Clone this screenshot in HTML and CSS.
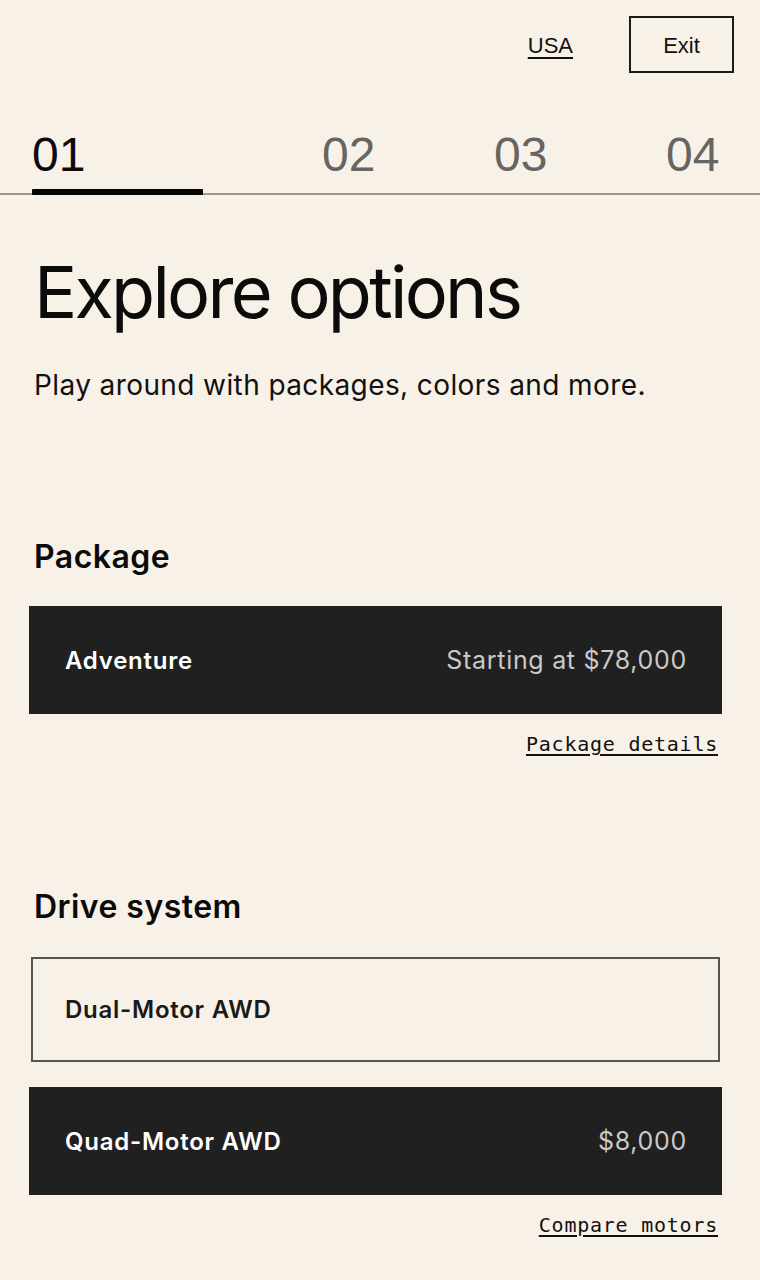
FILE: index.html
```html
<!DOCTYPE html>
<html lang="en">
<head>
<meta charset="utf-8">
<title>Explore options</title>
<link rel="stylesheet" href="styles.css">
</head>
<body>
  <header class="topbar">
    <a class="region" href="#">USA</a>
    <button class="exit" type="button">Exit</button>
  </header>

  <nav class="steps">
    <span class="step active">01</span>
    <span class="step">02</span>
    <span class="step">03</span>
    <span class="step">04</span>
  </nav>

  <main class="content">
    <section class="intro">
      <h1 class="title">Explore options</h1>
      <p class="lead">Play around with packages, colors and more.</p>
    </section>

    <section class="group group-package">
      <h2 class="group-title">Package</h2>
      <div class="option selected">
        <span class="option-name">Adventure</span>
        <span class="option-price">Starting at $78,000</span>
      </div>
      <div class="more-row"><a class="more" href="#">Package details</a></div>
    </section>

    <section class="group group-drive">
      <h2 class="group-title">Drive system</h2>
      <div class="option plain">
        <span class="option-name">Dual-Motor AWD</span>
      </div>
      <div class="option selected">
        <span class="option-name">Quad-Motor AWD</span>
        <span class="option-price">$8,000</span>
      </div>
      <div class="more-row"><a class="more" href="#">Compare motors</a></div>
    </section>
  </main>
</body>
</html>
```

FILE: styles.css
```css
* { box-sizing: border-box; }

html, body {
  margin: 0;
  padding: 0;
  background: #f8f1e7;
}

body {
  font-family: Inter, "Liberation Sans", Arial, sans-serif;
  color: #111;
  width: 760px;
  min-height: 1280px;
}

/* Top bar */
.topbar {
  display: flex;
  justify-content: flex-end;
  align-items: center;
  gap: 56px;
  padding: 16px 26px 0 0;
  height: 73px;
}

.region {
  font-family: "Liberation Sans", Arial, sans-serif;
  font-size: 22px;
  line-height: 26px;
  padding-top: 3px;
  color: #111;
  text-decoration: underline;
  text-decoration-thickness: 2px;
  text-underline-offset: 4px;
}

.exit {
  font-family: "Liberation Sans", Arial, sans-serif;
  font-size: 22px;
  color: #111;
  background: transparent;
  border: 2px solid #1a1a1a;
  width: 105px;
  height: 57px;
  padding: 3px 0 0;
  cursor: pointer;
}

/* Steps */
.steps {
  display: grid;
  grid-template-columns: 290px 172px 172px 1fr;
  margin-top: 58px;
  padding: 0 0 14px 32px;
  border-bottom: 2px solid #9a9880;
}

.step {
  position: relative;
  font-family: "Liberation Sans", Arial, sans-serif;
  font-size: 48px;
  line-height: 48px;
  color: #666561;
}

.step.active {
  color: #0b0b0b;
}

.step.active::after {
  content: "";
  position: absolute;
  left: 0;
  bottom: -16px;
  width: 171px;
  height: 6px;
  border-radius: 1px;
  background: #050505;
}

/* Content */
.content {
  padding: 0 38px 60px 29px;
}

.title {
  margin: 57px 0 0 5px;
  font-size: 72px;
  line-height: 80px;
  font-weight: 400;
  letter-spacing: -2.75px;
  color: #0b0b0b;
}

.lead {
  margin: 33px 0 0 5px;
  font-size: 28px;
  line-height: 40px;
  letter-spacing: 0.4px;
  color: #111;
}

.group-title {
  margin: 0 0 29px 5px;
  font-size: 32px;
  line-height: 40px;
  font-weight: 600;
  letter-spacing: 0.45px;
  color: #0b0b0b;
}

.group-package { margin-top: 132px; }
.group-drive { margin-top: 129px; }
.group-drive .group-title { margin-bottom: 30px; }

.option {
  display: flex;
  justify-content: space-between;
  align-items: center;
  height: 108px;
  padding: 0 35px 0 36px;
  font-size: 24px;
}

.option.selected {
  background: #202020;
  color: #fff;
}

.option.plain {
  height: 105px;
  margin: 0 2px 25px;
  padding-left: 32px;
  border: 2px solid #555;
  color: #1a1a1a;
}

.option-name {
  font-weight: 600;
  letter-spacing: 0.75px;
}

.option-price {
  font-size: 25px;
  color: #c9c9c9;
  font-weight: 400;
  letter-spacing: 0.7px;
}

.more-row {
  display: flex;
  justify-content: flex-end;
  padding-right: 4px;
  margin-top: 16px;
}

.more {
  font-family: "DejaVu Sans Mono", "Liberation Mono", monospace;
  font-size: 20px;
  line-height: 28px;
  letter-spacing: 0.76px;
  color: #111;
  text-decoration: underline;
  text-decoration-thickness: 2px;
  text-underline-offset: 3px;
}
```
